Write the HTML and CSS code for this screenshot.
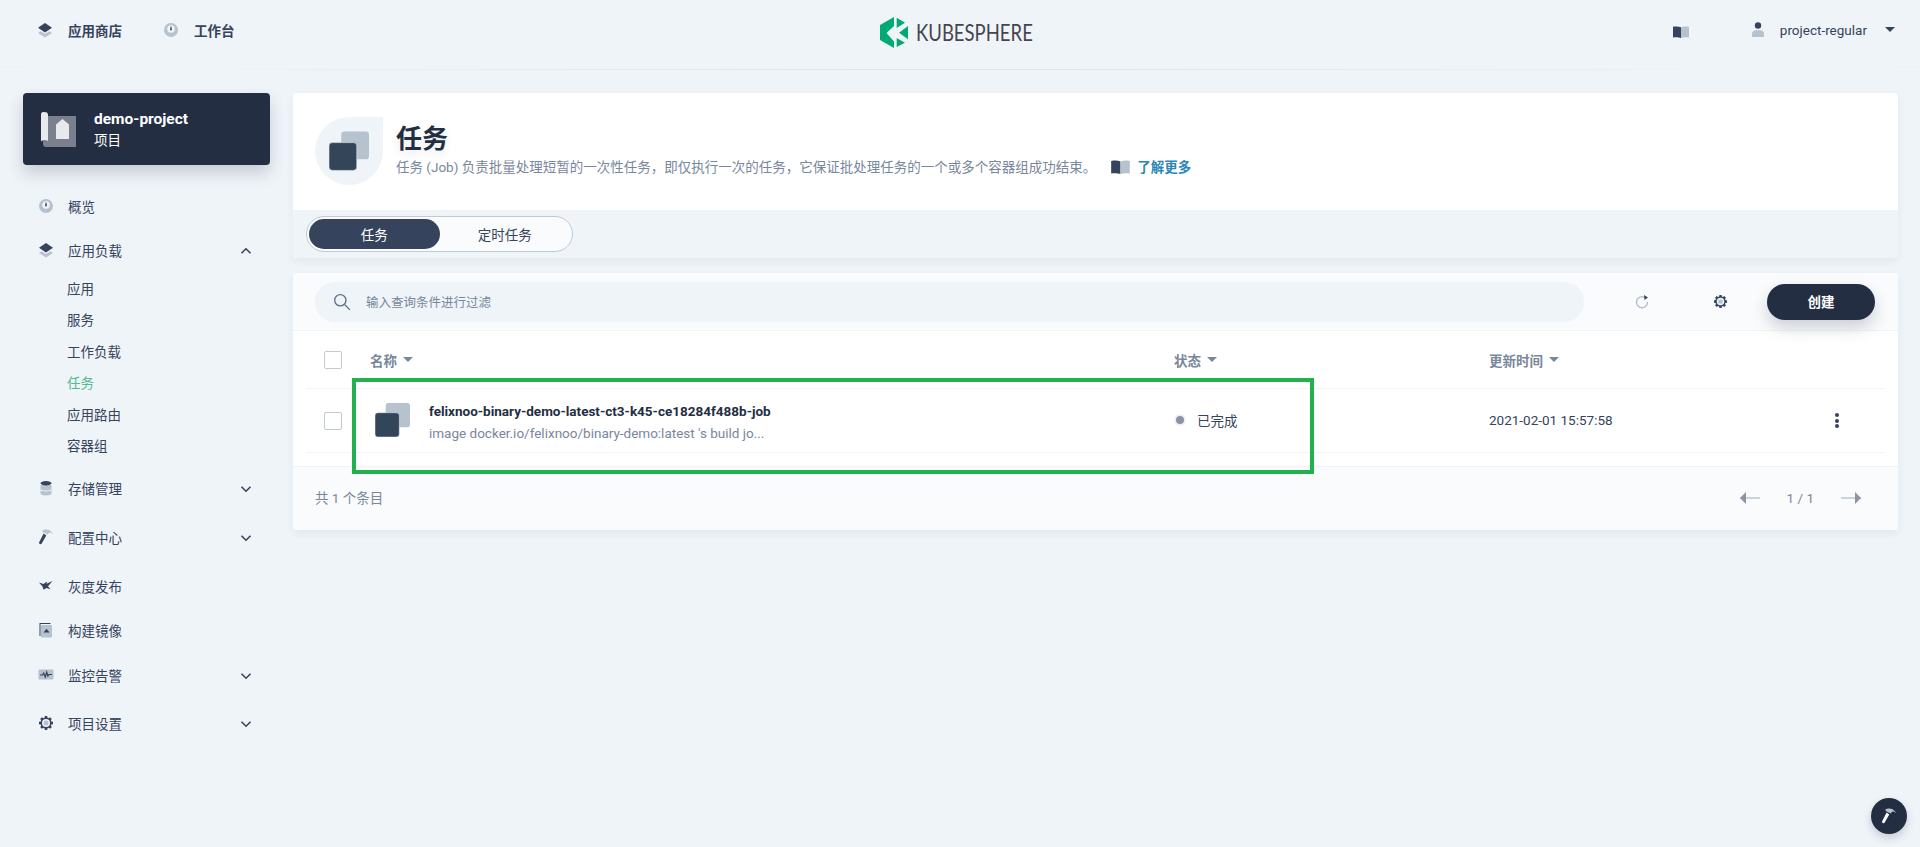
FILE: index.html
```html
<!DOCTYPE html>
<html lang="zh-CN">
<head>
  <meta charset="UTF-8" />
  <title>任务 - KubeSphere</title>
  <link rel="stylesheet" href="styles.css">
</head>

<body>
  <!-- Shared two-tone icons -->
  <svg class="icon-defs" aria-hidden="true">
    <symbol id="i-layers" viewBox="0 0 16 16">
      <path class="light" d="M8 15.500 1 11l2.600-1.700L8 12l4.400-2.700L15 11z" />
      <path class="dark" d="M8 1 1 5.800 8 10.400l7-4.600z" />
    </symbol>
    <symbol id="i-dial" viewBox="0 0 16 16">
      <circle class="light" cx="8" cy="8" r="7" />
      <circle class="pale" cx="8" cy="7" r="3.800" />
      <path class="dark" d="M7.600 4.500h.8l.5 3a.9.9 0 1 1-1.800 0z" />
    </symbol>
    <symbol id="i-db" viewBox="0 0 16 16">
      <path class="light" d="M2.500 5h11v8.500c0 1.200-2.500 2-5.500 2s-5.500-.8-5.500-2z" />
      <path class="pale" d="M2.500 9.300c1 .8 3 1.200 5.500 1.200s4.500-.4 5.500-1.200v.9c-1 .8-3 1.200-5.500 1.200s-5.500-.4-5.500-1.200z" />
      <ellipse class="dark" cx="8" cy="3.300" rx="5.500" ry="2.200" />
    </symbol>
    <symbol id="i-hammer" viewBox="0 0 16 16">
      <path class="light" d="M4 1.800C6 .2 9 0 11 1c1.800.9 3.200 2.400 4 4-1-1-2.300-1.700-3.200-1.500-.9.200-1.500 1-2 2L5.500 3.500z" />
      <path class="dark" d="M5.600 4.500 8.300 6.500 3.700 14.600c-.5.700-1.400.9-2 .4-.6-.4-.8-1.200-.4-1.900z" />
    </symbol>
    <symbol id="i-bird" viewBox="0 0 16 16">
      <path class="dark" d="M1 4.500 5.500 6 9 3.500l-.5 2.300L14.500 3 10 8.200l2.500 3-4-1.300-3 1.800-1-3.200z" />
    </symbol>
    <symbol id="i-image" viewBox="0 0 16 16">
      <path class="dark" d="M1.500 1h11v1H2.500v12h-1z" />
      <rect class="light" x="3" y="3" width="11" height="12.500" rx="1" />
      <path class="dark" d="M8.500 6.800 11.500 10.500h-6z" />
    </symbol>
    <symbol id="i-monitor" viewBox="0 0 16 16">
      <rect class="light" x="0.500" y="2.500" width="15" height="10" rx="1" />
      <path class="stroke-dark" d="M2 8h2.500l1.200-2 1.500 4 1.500-5 1.200 4 1-1.500H14" />
    </symbol>
    <symbol id="i-gear" viewBox="0 0 16 16">
      <path class="dark" d="M6.800 1h2.400l.3 1.700 1.200.5 1.400-1 1.700 1.700-1 1.400.5 1.200 1.700.3v2.400l-1.700.3-.5 1.200 1 1.400-1.700 1.700-1.400-1-1.200.5-.3 1.700H6.800l-.3-1.700-1.200-.5-1.400 1-1.700-1.700 1-1.400-.5-1.200L1 9.200V6.800l1.700-.3.5-1.200-1-1.400 1.700-1.700 1.400 1 1.200-.5z" />
      <circle class="pale" cx="8" cy="8" r="4" />
      <circle class="light" cx="8" cy="8" r="2.500" />
    </symbol>
    <symbol id="i-book" viewBox="0 0 16 12">
      <path class="dark" d="M0 .8C3 .2 6 .4 8 1.200V12c-2-.8-5-1-8-.4z" />
      <path class="light" d="M8 1.200c2-.8 5-1 8-.4v10.800c-3-.6-6-.4-8 .4z" />
    </symbol>
    <symbol id="i-job" viewBox="0 0 36 36">
      <rect class="light" x="11" y="0" width="25" height="25" rx="3" />
      <rect class="job-front" x="0" y="10" width="25" height="25" rx="3" />
    </symbol>
    <symbol id="i-down" viewBox="0 0 16 16">
      <path class="chevron" d="M3.500 5.800 8 10.200l4.500-4.400" />
    </symbol>
    <symbol id="i-up" viewBox="0 0 16 16">
      <path class="chevron" d="M3.500 10.200 8 5.800l4.500 4.400" />
    </symbol>
  </svg>

  <!-- Top bar -->
  <header class="topbar">
    <nav class="top-nav">
      <a class="top-link"><svg class="icon"><use href="#i-layers" /></svg>应用商店</a>
      <a class="top-link"><svg class="icon"><use href="#i-dial" /></svg>工作台</a>
    </nav>
    <div class="logo">
      <svg class="logo-mark" viewBox="0 0 28 31">
        <path d="M14 0 0 8v15l14 8v-6.500L6.500 16 14 9z" />
        <path d="M16.700.7 25 5.700 16.700 11zM28 9v13.300L19 15.700zM16.700 21 25 25.700 16.700 30z" />
      </svg>
      <span class="logo-text">KUBESPHERE</span>
    </div>
    <div class="top-right">
      <svg class="icon-book"><use href="#i-book" /></svg>
      <svg class="icon-user" viewBox="0 0 12 15">
        <circle class="dark" cx="6" cy="3.500" r="3.200" />
        <path class="light" d="M0 15v-3c0-2.400 2-3.700 3.500-3.700h5c1.500 0 3.500 1.300 3.500 3.700v3z" />
      </svg>
      <span class="user-name">project-regular</span>
      <span class="user-caret"></span>
    </div>
  </header>

  <div class="page">
    <!-- Sidebar -->
    <aside class="sidebar">
      <div class="project-card">
        <svg class="project-icon" viewBox="0 0 35 35">
          <path fill="#7b808e" d="M3 4h32v31H5a3 3 0 0 1-3-3z" />
          <path fill="#e8e9ed" d="M0 2.500a2.500 2.500 0 0 1 3-2.500c2.500 0 4 .8 4 2.500V29c-2-1.500-5-1.500-7 .5z" />
          <path fill="#e8e9ed" d="M15 12.500 21.500 7 28 12.500V27H15z" />
        </svg>
        <div>
          <div class="project-name">demo-project</div>
          <div class="project-type">项目</div>
        </div>
      </div>

      <ul class="nav">
        <li class="nav-item"><svg class="icon"><use href="#i-dial" /></svg>概览</li>
        <li class="nav-item open"><svg class="icon"><use href="#i-layers" /></svg>应用负载<svg class="arrow"><use href="#i-up" /></svg></li>
        <li class="sub-list">
          <a class="sub-item">应用</a>
          <a class="sub-item">服务</a>
          <a class="sub-item">工作负载</a>
          <a class="sub-item active">任务</a>
          <a class="sub-item">应用路由</a>
          <a class="sub-item">容器组</a>
        </li>
        <li class="nav-item parent"><svg class="icon"><use href="#i-db" /></svg>存储管理<svg class="arrow"><use href="#i-down" /></svg></li>
        <li class="nav-item parent"><svg class="icon"><use href="#i-hammer" /></svg>配置中心<svg class="arrow"><use href="#i-down" /></svg></li>
        <li class="nav-item"><svg class="icon"><use href="#i-bird" /></svg>灰度发布</li>
        <li class="nav-item build"><svg class="icon"><use href="#i-image" /></svg>构建镜像</li>
        <li class="nav-item parent"><svg class="icon"><use href="#i-monitor" /></svg>监控告警<svg class="arrow"><use href="#i-down" /></svg></li>
        <li class="nav-item"><svg class="icon"><use href="#i-gear" /></svg>项目设置<svg class="arrow"><use href="#i-down" /></svg></li>
      </ul>
    </aside>

    <!-- Main content -->
    <main class="content">
      <section class="banner">
        <div class="banner-head">
          <div class="banner-icon"><svg class="banner-job"><use href="#i-job" /></svg></div>
          <div>
            <h1 class="banner-title">任务</h1>
            <p class="banner-desc">任务 (Job) 负责批量处理短暂的一次性任务，即仅执行一次的任务，它保证批处理任务的一个或多个容器组成功结束。<svg class="learn-icon"><use href="#i-book" /></svg><a class="learn-more">了解更多</a></p>
          </div>
        </div>
        <div class="banner-tabs">
          <div class="tabs">
            <span class="tab active">任务</span>
            <span class="tab">定时任务</span>
          </div>
        </div>
      </section>

      <section class="table-card">
        <div class="toolbar">
          <div class="search">
            <svg class="search-icon" viewBox="0 0 16 16">
              <circle cx="6.500" cy="6.500" r="5" />
              <path d="m10.500 10.500 4.500 4.500" />
            </svg>
            <span>输入查询条件进行过滤</span>
          </div>
          <svg class="refresh-icon" viewBox="0 0 14 14">
            <path class="refresh-arc" d="M9.500 2.300A5.500 5.500 0 1 0 12.500 7" />
            <path class="dark" d="M9 0l4 2.500-3.500 2.500z" />
          </svg>
          <svg class="settings-icon"><use href="#i-gear" /></svg>
          <button class="create-btn" type="button">创建</button>
        </div>

        <div class="row head">
          <span class="check"></span>
          <span class="col-title">名称<i class="sort"></i></span>
          <span class="col-title">状态<i class="sort"></i></span>
          <span class="col-title">更新时间<i class="sort"></i></span>
          <span></span>
        </div>
        <div class="row body-row">
          <span class="check"></span>
          <div class="job-cell">
            <svg class="job-icon"><use href="#i-job" /></svg>
            <div class="job-text">
              <div class="job-name">felixnoo-binary-demo-latest-ct3-k45-ce18284f488b-job</div>
              <div class="job-desc">image docker.io/felixnoo/binary-demo:latest 's build jo...</div>
            </div>
          </div>
          <div class="status"><i class="status-dot"></i>已完成</div>
          <div class="time">2021-02-01 15:57:58</div>
          <div class="more"><i></i><i></i><i></i></div>
        </div>

        <div class="table-footer">
          <span class="total">共 1 个条目</span>
          <div class="pager">
            <span class="pager-arrow left"></span>
            <span class="pager-text">1 / 1</span>
            <span class="pager-arrow right"></span>
          </div>
        </div>

        <!-- Annotation box from the screenshot -->
        <div class="highlight"></div>
      </section>
    </main>
  </div>

  <button class="tool-btn" type="button">
    <svg viewBox="0 0 16 16">
      <path fill="#b6c2cd" d="M4 1.800C6 .2 9 0 11 1c1.800.9 3.200 2.400 4 4-1-1-2.300-1.700-3.200-1.500-.9.200-1.500 1-2 2L5.500 3.500z" />
      <path fill="#ffffff" d="M5.600 4.500 8.300 6.500 3.700 14.600c-.5.700-1.400.9-2 .4-.6-.4-.8-1.200-.4-1.900z" />
    </svg>
  </button>
</body>
</html>
```

FILE: styles.css
```css
* {
  box-sizing: border-box;
  margin: 0;
  padding: 0;
}

html,
body {
  height: 100%;
  overflow: hidden;
}

body {
  font-family: Roboto, 'Noto Sans CJK SC', sans-serif;
  font-size: 13.5px;
  background: #eff4f9;
  color: #36435c;
}

ul {
  list-style: none;
}

/* Icon colours */
.icon-defs {
  position: absolute;
  width: 0;
  height: 0;
}

.dark {
  fill: #36435c;
}

.light {
  fill: #b6c2cd;
}

.pale {
  fill: #eff4f9;
}

.job-front {
  fill: #334559;
  stroke: #eff4f9;
  stroke-width: 0.5;
}

.stroke-dark {
  fill: none;
  stroke: #36435c;
  stroke-width: 1.2;
}

.chevron {
  fill: none;
  stroke: #36435c;
  stroke-width: 1.6;
}

.icon {
  width: 16px;
  height: 16px;
  flex: none;
}

/* Top bar */
.topbar {
  position: relative;
  display: flex;
  align-items: center;
  justify-content: space-between;
  height: 70px;
  padding: 0 25px 10px 37px;
  border-bottom: 1px solid;
  border-image: linear-gradient(90deg, #f3f6fa, #dde3e9 50%, #f3f6fa) 1;
}

.top-nav {
  display: flex;
  gap: 41px;
}

.top-link {
  display: flex;
  align-items: center;
  gap: 15px;
  font-weight: 700;
  color: #36435c;
}

.logo {
  position: absolute;
  left: 880px;
  top: 17px;
  display: flex;
  align-items: center;
  gap: 8px;
}

.logo-mark {
  width: 28px;
  height: 31px;
  fill: #00aa72;
}

.logo-text {
  font-family: Lato, sans-serif;
  font-size: 23px;
  line-height: 31px;
  color: #474350;
  transform: scaleX(0.805);
  transform-origin: left center;
}

.top-right {
  display: flex;
  align-items: center;
}

.icon-book {
  width: 16px;
  height: 12px;
  margin-right: 63px;
  margin-top: 4px;
}

.icon-user {
  width: 12px;
  height: 15px;
  margin-right: 16px;
}

.user-name {
  margin-right: 18px;
}

.user-caret {
  width: 0;
  height: 0;
  border: 5px solid transparent;
  border-top: 5px solid #36435c;
  margin-top: 5px;
}

/* Page layout */
.page {
  display: flex;
  padding-top: 23px;
}

.sidebar {
  width: 293px;
  flex: none;
  padding-left: 23px;
}

.project-card {
  display: flex;
  align-items: center;
  gap: 18px;
  width: 247px;
  height: 72px;
  padding-left: 18px;
  background: #242e42;
  border-radius: 4px;
  box-shadow: 0 8px 16px rgba(36, 46, 66, 0.2);
  color: #fff;
}

.project-icon {
  width: 35px;
  height: 35px;
}

.project-name {
  font-size: 15.5px;
  font-weight: 700;
  line-height: 21px;
}

.project-type {
  line-height: 20px;
}

/* Sidebar nav */
.nav {
  padding: 25px 0 0 15px;
  width: 231px;
}

.nav-item {
  display: flex;
  align-items: center;
  gap: 14px;
  height: 32px;
  margin-bottom: 12px;
  color: #36435c;
}

.nav-item.open {
  margin-bottom: 0;
}

.nav-item.parent {
  margin-bottom: 17px;
}

.nav-item.build {
  margin-bottom: 13px;
}

.nav-item.build + .parent {
  margin-bottom: 16px;
}

.arrow {
  width: 16px;
  height: 16px;
  margin-left: auto;
  margin-top: 2px;
}

.sub-list {
  display: flex;
  flex-direction: column;
  padding: 8px 0 10px 29px;
}

.sub-item {
  height: 31.4px;
  line-height: 31.4px;
}

.sub-item.active {
  color: #55bc8a;
}

/* Banner */
.content {
  width: 1605px;
  flex: none;
}

.banner {
  background: #fff;
  border-radius: 4px;
  box-shadow: 0 4px 8px rgba(36, 46, 66, 0.06);
  overflow: hidden;
}

.banner-head {
  display: flex;
  gap: 13px;
  height: 117px;
  padding: 24px 22px 0;
}

.banner-icon {
  display: flex;
  align-items: center;
  justify-content: center;
  width: 68px;
  height: 68px;
  background: #eff4f9;
  border-radius: 50% 0 50% 50%;
}

.banner-job {
  width: 40px;
  height: 41px;
}

.banner-title {
  margin: 2px 0 -1px;
  font-size: 26px;
  font-weight: 700;
  line-height: 40px;
  color: #242e42;
  text-shadow: 0 4px 8px rgba(36, 46, 66, 0.1);
}

.banner-desc {
  display: flex;
  align-items: center;
  line-height: 18px;
  color: #79879c;
}

.learn-icon {
  width: 19px;
  height: 14px;
  margin: 0 7px 0 15px;
}

.learn-more {
  font-weight: 700;
  color: #2d86b5;
}

.banner-tabs {
  height: 48px;
  padding: 6px 13px;
  background: #eff4f9;
}

.tabs {
  display: flex;
  width: 267px;
  height: 36px;
  padding: 2px;
  background: #f9fbfd;
  border: 1px solid #c1c9d1;
  border-radius: 18px;
}

.tab {
  display: flex;
  align-items: center;
  justify-content: center;
  width: 132px;
  padding-bottom: 1px;
  border-radius: 15px;
}

.tab.active {
  background: #36435c;
  color: #fff;
}

/* Table card */
.table-card {
  position: relative;
  margin-top: 15px;
  background: #fff;
  border-radius: 4px;
  box-shadow: 0 4px 8px rgba(36, 46, 66, 0.06);
}

.toolbar {
  display: flex;
  align-items: center;
  height: 58px;
  padding: 0 23px 0 22px;
  background: #f9fbfd;
  border-bottom: 1px solid #eff4f9;
  border-radius: 4px 4px 0 0;
}

.search {
  display: flex;
  align-items: center;
  gap: 15px;
  width: 1269px;
  height: 40px;
  padding-left: 18px;
  background: #eff4f9;
  border-radius: 20px;
  font-size: 12.5px;
  color: #79879c;
}

.search-icon {
  width: 18px;
  height: 18px;
  fill: none;
  stroke: #5f708a;
  stroke-width: 1.2;
}

.refresh-icon {
  width: 14px;
  height: 14px;
  margin-left: 51px;
}

.refresh-arc {
  fill: none;
  stroke: #b6c2cd;
  stroke-width: 1.5;
}

.settings-icon {
  width: 15px;
  height: 15px;
  margin-left: 64px;
}

.create-btn {
  width: 108px;
  height: 36px;
  margin-left: 39px;
  padding-bottom: 2px;
  border: none;
  border-radius: 18px;
  background: #242e42;
  box-shadow: 0 8px 16px rgba(36, 46, 66, 0.2);
  color: #fff;
  font: 700 13.5px Roboto, 'Noto Sans CJK SC', sans-serif;
}

.row {
  display: grid;
  grid-template-columns: 64px 804px 315px 1fr 50px;
  align-items: center;
  margin: 0 13px;
}

.row.head {
  height: 58px;
  border-bottom: 1px solid #eff4f9;
}

.row.body-row {
  height: 64px;
  border-bottom: 1px solid #eff4f9;
}

.check {
  width: 18px;
  height: 18px;
  margin-left: 18px;
  background: #fff;
  border: 1px solid #c1c9d1;
  border-radius: 2px;
}

.col-title {
  display: flex;
  align-items: center;
  gap: 6px;
  font-weight: 700;
  color: #79879c;
}

.sort {
  width: 0;
  height: 0;
  border: 5px solid transparent;
  border-top: 5px solid #79879c;
  margin-top: 5px;
}

.job-cell {
  display: flex;
  align-items: center;
  gap: 19px;
  padding-left: 5px;
}

.job-icon {
  width: 35px;
  height: 35px;
}

.job-text {
  padding-top: 3px;
}

.job-name {
  font-weight: 700;
  line-height: 22px;
  color: #242e42;
}

.job-desc {
  line-height: 22px;
  color: #79879c;
}

.status {
  display: flex;
  align-items: center;
  gap: 11px;
  padding-bottom: 2px;
}

.status-dot {
  width: 12px;
  height: 12px;
  background: #8a94a4;
  border: 2px solid #eff1f5;
  border-radius: 50%;
}

.time {
  padding-bottom: 2px;
  color: #36435c;
}

.more {
  display: flex;
  flex-direction: column;
  align-items: center;
  gap: 1.5px;
  width: 4px;
}

.more i {
  width: 4px;
  height: 4px;
  background: #36435c;
  border-radius: 50%;
}

.table-footer {
  display: flex;
  align-items: center;
  justify-content: space-between;
  height: 64px;
  margin-top: 13px;
  padding: 0 37px 2px 22px;
  background: #f9fbfd;
  border-top: 1px solid #eff4f9;
  border-radius: 0 0 4px 4px;
  color: #79879c;
}

.total {
  padding-bottom: 2px;
}

.pager {
  display: flex;
  align-items: center;
  gap: 27px;
}

.pager-arrow {
  position: relative;
  width: 20px;
  height: 2px;
  background: #c9d3dc;
}

.pager-arrow::before {
  content: '';
  position: absolute;
  top: -5px;
  border: 6px solid transparent;
}

.pager-arrow.left::before {
  left: 0;
  border-right: 6px solid #8a94a4;
  border-left-width: 0;
}

.pager-arrow.right::before {
  right: 0;
  border-left: 6px solid #8a94a4;
  border-right-width: 0;
}

/* Green annotation, sits over the table */
.highlight {
  position: absolute;
  left: 59px;
  top: 105px;
  width: 962px;
  height: 96px;
  border: 4px solid #22b14c;
}

.tool-btn {
  position: fixed;
  left: 1871px;
  top: 798px;
  display: flex;
  align-items: center;
  justify-content: center;
  width: 36px;
  height: 36px;
  border: none;
  border-radius: 50%;
  background: #242e42;
  box-shadow: 0 4px 8px rgba(36, 46, 66, 0.2);
}

.tool-btn svg {
  width: 16px;
  height: 16px;
}
```
